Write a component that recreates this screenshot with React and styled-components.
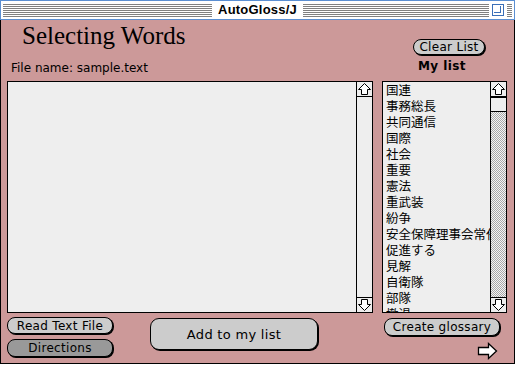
import React from "react";
import styled, { createGlobalStyle } from "styled-components";

const GlobalStyle = createGlobalStyle`
  html, body { margin: 0; padding: 0; background: #ffffff; }
  body { font-family: "DejaVu Sans", "Liberation Sans", sans-serif; }
  * { box-sizing: border-box; }
`;

const Window = styled.div`
  width: 515px;
  height: 364px;
  display: flex;
  flex-direction: column;
`;

const TitleBar = styled.div`
  height: 20px;
  border: 1px solid #5b8fd2;
  background: #ffffff;
  display: grid;
  grid-template-columns: 1fr auto 1fr;
  align-items: center;
  padding: 0 2px;
`;

const Stripes = styled.div`
  height: 13px;
  flex: 1;
  background: repeating-linear-gradient(
    to bottom,
    #808080 0 1px,
    transparent 1px 2px
  );
`;

const TitleRight = styled.div`
  display: flex;
  align-items: center;
  gap: 3px;
`;

const Title = styled.div`
  padding: 0 6px;
  font-family: "Liberation Sans", sans-serif;
  font-weight: bold;
  font-size: 13px;
  line-height: 16px;
  letter-spacing: 0.2px;
  color: #000;
`;

const ZoomBox = styled.div`
  width: 12px;
  height: 12px;
  border: 1px solid #3a6fb8;
  background: #fff;
  position: relative;
  flex: none;
  &::after {
    content: "";
    position: absolute;
    left: 1px;
    top: 1px;
    width: 6px;
    height: 6px;
    border-right: 1px solid #3a6fb8;
    border-bottom: 1px solid #3a6fb8;
  }
`;

const TailStripe = styled(Stripes)`
  flex: none;
  width: 5px;
`;

const Body = styled.div`
  flex: 1;
  background: #cc9999;
  border: 1px solid #000;
  border-top: none;
  padding: 0 7px 0 6px;
  display: grid;
  grid-template-columns: 366px 125px;
  column-gap: 9px;
  grid-template-rows: 61px 232px 1fr;
`;

const HeaderLeft = styled.div`
  display: flex;
  flex-direction: column;
  padding-top: 4px;
`;

const Heading = styled.h1`
  margin: 0 0 0 15px;
  font-family: "Liberation Serif", serif;
  font-weight: normal;
  font-size: 25px;
  line-height: 24px;
  color: #000;
`;

const FileName = styled.div`
  margin: 13px 0 0 4px;
  font-size: 12px;
  line-height: 14px;
  color: #000;
`;

const HeaderRight = styled.div`
  display: flex;
  flex-direction: column;
  padding-top: 19px;
`;

const Button = styled.button`
  font-family: "DejaVu Sans", sans-serif;
  font-size: ${(p) => p.$size || 12}px;
  color: #000;
  background: ${(p) => (p.$dark ? "#999999" : "#cccccc")};
  border: 1px solid #000;
  border-radius: ${(p) => p.$radius || 8}px;
  box-shadow: 1px 1px 0 #000;
  width: ${(p) => p.$w}px;
  height: ${(p) => p.$h}px;
  padding: 0;
  line-height: 1;
  letter-spacing: 0.3px;
  display: flex;
  align-items: center;
  justify-content: center;
  flex: none;
`;

const ClearButton = styled(Button)`
  margin-left: 31px;
`;

const MyList = styled.div`
  margin: 4px 0 0 36px;
  font-family: "DejaVu Sans", sans-serif;
  font-weight: bold;
  font-size: 12px;
  line-height: 14px;
  letter-spacing: 0.4px;
  color: #000;
`;

const Pane = styled.div`
  border: 1px solid #000;
  background: #eeeeee;
  display: flex;
  overflow: hidden;
`;

const PaneContent = styled.div`
  flex: 1;
  overflow: hidden;
  padding: 0 0 0 3px;
`;

const ListItem = styled.div`
  font-family: "Noto Sans CJK JP", sans-serif;
  font-size: 12.5px;
  line-height: 16px;
  white-space: nowrap;
  color: #000;
`;

const ScrollBar = styled.div`
  width: 16px;
  border-left: 1px solid #000;
  display: flex;
  flex-direction: column;
  background: ${(p) =>
    p.$active
      ? "repeating-conic-gradient(#a8a8a8 0 25%, #f4f4f4 0 50%) 0 0 / 2px 2px"
      : "#eeeeee"};
  flex: none;
`;

const ArrowCell = styled.div`
  height: 15px;
  background: #eeeeee;
  border-${(p) => (p.$down ? "top" : "bottom")}: 1px solid #000;
  display: flex;
  align-items: center;
  justify-content: center;
  flex: none;
`;

const Thumb = styled.div`
  height: 15px;
  background: #eeeeee;
  border-bottom: 1px solid #000;
  border-top: 1px solid #000;
  flex: none;
`;

const Track = styled.div`
  flex: 1;
`;

const FooterLeft = styled.div`
  display: flex;
  align-items: flex-start;
  padding-top: 4px;
`;

const ButtonStack = styled.div`
  display: flex;
  flex-direction: column;
  gap: 5px;
`;

const AddButton = styled(Button)`
  margin: 1px 0 0 37px;
`;

const FooterRight = styled.div`
  display: flex;
  flex-direction: column;
  align-items: flex-start;
  padding: 5px 0 0 2px;
`;

const NextArrow = styled.div`
  margin: 6px 0 0 93px;
  line-height: 0;
`;

const UpArrow = ({ down }) => (
  <svg width="15" height="14" viewBox="0 0 15 14" style={down ? { transform: "rotate(180deg)" } : undefined}>
    <polygon
      points="7.5,1.5 13.5,7.5 10.5,7.5 10.5,12.5 4.5,12.5 4.5,7.5 1.5,7.5"
      fill="#fff"
      stroke="#000"
      strokeWidth="1"
      strokeLinejoin="miter"
    />
  </svg>
);

const RightArrow = () => (
  <svg width="22" height="18" viewBox="0 0 22 18">
    <polygon
      points="1.5,5.5 11.5,5.5 11.5,1.5 19.5,9 11.5,16.5 11.5,12.5 1.5,12.5"
      fill="#fff"
      stroke="#000"
      strokeWidth="1.3"
    />
  </svg>
);

const words = [
  "国連",
  "事務総長",
  "共同通信",
  "国際",
  "社会",
  "重要",
  "憲法",
  "重武装",
  "紛争",
  "安全保障理事会常任",
  "促進する",
  "見解",
  "自衛隊",
  "部隊",
  "撤退",
];

export default function App() {
  return (
    <>
      <GlobalStyle />
      <Window>
        <TitleBar>
          <Stripes />
          <Title>AutoGloss/J</Title>
          <TitleRight>
            <Stripes />
            <ZoomBox />
            <TailStripe />
          </TitleRight>
        </TitleBar>
        <Body>
          <HeaderLeft>
            <Heading>Selecting Words</Heading>
            <FileName>File name: sample.text</FileName>
          </HeaderLeft>
          <HeaderRight>
            <ClearButton $w={72} $h={16} $radius={8}>
              Clear List
            </ClearButton>
            <MyList>My list</MyList>
          </HeaderRight>
          <Pane>
            <PaneContent />
            <ScrollBar>
              <ArrowCell>
                <UpArrow />
              </ArrowCell>
              <Track />
              <ArrowCell $down>
                <UpArrow down />
              </ArrowCell>
            </ScrollBar>
          </Pane>
          <Pane>
            <PaneContent>
              {words.map((w) => (
                <ListItem key={w}>{w}</ListItem>
              ))}
            </PaneContent>
            <ScrollBar $active>
              <ArrowCell>
                <UpArrow />
              </ArrowCell>
              <Thumb />
              <Track />
              <ArrowCell $down>
                <UpArrow down />
              </ArrowCell>
            </ScrollBar>
          </Pane>
          <FooterLeft>
            <ButtonStack>
              <Button $w={106} $h={17}>Read Text File</Button>
              <Button $w={106} $h={18} $dark>
                Directions
              </Button>
            </ButtonStack>
            <AddButton $w={168} $h={32} $radius={9} $size={13}>
              Add to my list
            </AddButton>
          </FooterLeft>
          <FooterRight>
            <Button $w={116} $h={18}>Create glossary</Button>
            <NextArrow>
              <RightArrow />
            </NextArrow>
          </FooterRight>
        </Body>
      </Window>
    </>
  );
}
